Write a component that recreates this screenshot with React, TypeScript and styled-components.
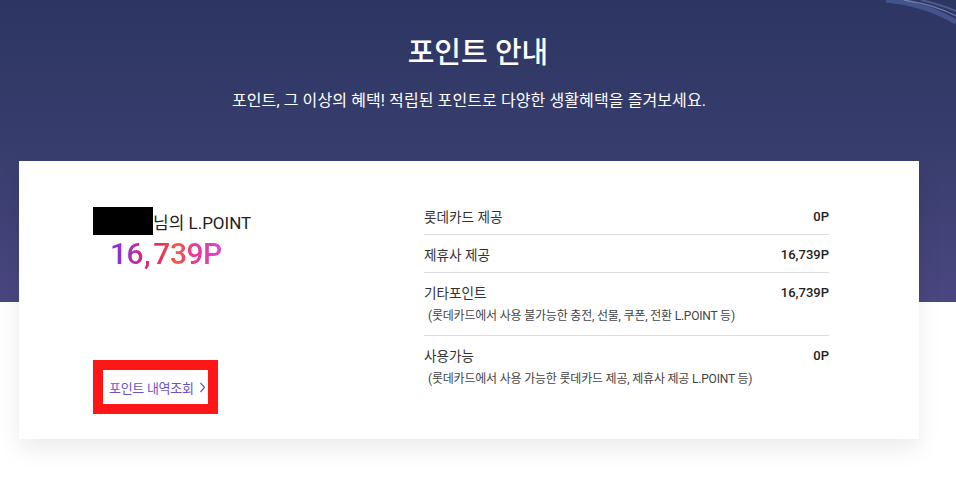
import React from 'react';
import styled, { createGlobalStyle } from 'styled-components';

const GlobalStyle = createGlobalStyle`
  html, body {
    margin: 0;
    padding: 0;
    background: #ffffff;
  }
  body {
    font-family: 'Roboto', 'Noto Sans CJK KR', sans-serif;
    -webkit-font-smoothing: antialiased;
  }
`;

const Page = styled.div`
  position: relative;
  width: 956px;
  height: 487px;
  overflow: hidden;
  display: flex;
  flex-direction: column;
  align-items: center;
  background:
    linear-gradient(180deg, #2d3562 0%, #363d6c 45%, #4a4680 100%) top / 100% 302px no-repeat,
    #ffffff;
`;

const Streak = styled.svg`
  position: absolute;
  top: 0;
  right: 0;
  width: 90px;
  height: 30px;
  pointer-events: none;
`;

const Title = styled.h1`
  margin: 34px 0 0;
  font-size: 29px;
  line-height: 38px;
  font-weight: 500;
  color: #ffffff;
  letter-spacing: 0;
`;

const Subtitle = styled.p`
  margin: 18px 18px 0 0;
  font-size: 16px;
  line-height: 22px;
  font-weight: 400;
  color: #ffffff;
  letter-spacing: 0.1px;
`;

const Card = styled.section`
  box-sizing: border-box;
  align-self: flex-start;
  width: 900px;
  margin: 49px 0 0 19px;
  padding: 46px 90px 25px 74px;
  background: #ffffff;
  box-shadow: 0 10px 22px rgba(0, 0, 0, 0.08);
  display: grid;
  grid-template-columns: 331px 1fr;
`;

const Summary = styled.div`
  display: flex;
  flex-direction: column;
  align-items: flex-start;
`;

const NameLine = styled.div`
  display: flex;
  align-items: center;
  height: 28px;
  font-size: 17px;
  font-weight: 400;
  color: #222222;
`;

const Redacted = styled.span`
  display: inline-block;
  width: 60px;
  height: 28px;
  background: #000000;
`;

const Amount = styled.div`
  margin-top: 1px;
  padding-left: 17px;
  font-size: 30px;
  line-height: 36px;
  font-weight: 500;
  letter-spacing: -0.5px;
  background: linear-gradient(90deg, #8a2fd9 0%, #8f2fd6 24%, #cf2f86 38%, #e8305f 52%, #f0573d 64%, #e8369a 80%, #d64bd4 100%);
  -webkit-background-clip: text;
  background-clip: text;
  color: transparent;
`;

const Comma = styled.span`
  margin: 0 3px 0 1px;
`;

const HistoryLink = styled.a`
  display: flex;
  align-items: center;
  gap: 5px;
  box-sizing: border-box;
  width: 125px;
  height: 54px;
  margin-top: 88px;
  padding: 0 0 0 6px;
  border: 10px solid #ff1717;
  font-size: 13px;
  color: #6c51c6;
  text-decoration: none;
  letter-spacing: -0.3px;
  white-space: nowrap;
`;

const List = styled.div`
  display: flex;
  flex-direction: column;
`;

const Row = styled.div`
  padding: 10px 0 9px;
  border-bottom: 1px solid #dddddd;

  &:first-child {
    padding-top: 0;
  }
  &:last-child {
    border-bottom: none;
  }
`;

const RowHead = styled.div`
  display: flex;
  justify-content: space-between;
  align-items: center;
  height: 18px;
  font-size: 13.6px;
  color: #333333;
`;

const Value = styled.span`
  font-size: 13px;
  font-weight: 500;
  color: #222222;
`;

const Note = styled.div`
  margin: 7px 0 2px;
  padding-left: 4px;
  font-size: 12px;
  line-height: 16px;
  color: #444444;
  letter-spacing: -0.2px;
`;

const rows = [
  { label: '롯데카드 제공', value: '0P' },
  { label: '제휴사 제공', value: '16,739P' },
  { label: '기타포인트', value: '16,739P', note: '(롯데카드에서 사용 불가능한 충전, 선물, 쿠폰, 전환 L.POINT 등)' },
  { label: '사용가능', value: '0P', note: '(롯데카드에서 사용 가능한 롯데카드 제공, 제휴사 제공 L.POINT 등)' },
];

export default function App() {
  return (
    <Page>
      <GlobalStyle />
      <Streak viewBox="0 0 90 30" aria-hidden="true">
        <path d="M20 0 Q 60 4 90 22" fill="none" stroke="rgba(110,140,220,0.35)" strokeWidth="5" />
        <path d="M38 0 Q 70 5 90 16" fill="none" stroke="rgba(190,205,250,0.45)" strokeWidth="1.3" />
        <path d="M55 0 Q 76 5 90 11" fill="none" stroke="rgba(150,175,240,0.3)" strokeWidth="2" />
      </Streak>
      <Title>포인트 안내</Title>
      <Subtitle>포인트, 그 이상의 혜택! 적립된 포인트로 다양한 생활혜택을 즐겨보세요.</Subtitle>
      <Card>
        <Summary>
          <NameLine>
            <Redacted />님의 L.POINT
          </NameLine>
          <Amount>
            16<Comma>,</Comma>739P
          </Amount>
          <HistoryLink href="#">
            포인트 내역조회
            <svg width="7" height="11" viewBox="0 0 7 11" aria-hidden="true">
              <polyline points="1.5,1 5.5,5.5 1.5,10" fill="none" stroke="#6c51c6" strokeWidth="1.2" />
            </svg>
          </HistoryLink>
        </Summary>
        <List>
          {rows.map((r) => (
            <Row key={r.label}>
              <RowHead>
                <span>{r.label}</span>
                <Value>{r.value}</Value>
              </RowHead>
              {r.note && <Note>{r.note}</Note>}
            </Row>
          ))}
        </List>
      </Card>
    </Page>
  );
}
